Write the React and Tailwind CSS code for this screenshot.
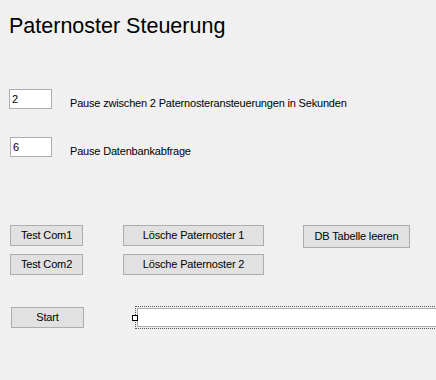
export default function App() {
  const font = { fontFamily: '"Liberation Sans", Arial, sans-serif' };
  const btn =
    "shrink-0 flex items-center justify-center bg-[#e1e1e1] border border-[#adadad] text-[11px] leading-[13px] tracking-[-0.15px] text-black whitespace-nowrap";
  return (
    <div
      className="w-[436px] h-[380px] bg-[#f0f0f0] overflow-hidden flex flex-col"
      style={font}
    >
      <div className="mt-[14px] pl-[9px] text-[21.5px] leading-[24px] text-black whitespace-nowrap">
        Paternoster Steuerung
      </div>

      <div className="mt-[51px] flex items-start">
        <input
          defaultValue="2"
          className="shrink-0 ml-[9px] w-[43px] h-[20px] bg-white border border-[#abadb3] px-[2px] text-[11px] text-black outline-none"
          style={font}
        />
        <div className="ml-[18px] mt-[8px] text-[11px] leading-[13px] tracking-[-0.18px] text-black whitespace-nowrap">
          Pause zwischen 2 Paternosteransteuerungen in Sekunden
        </div>
      </div>

      <div className="mt-[27px] flex items-start">
        <input
          defaultValue="6"
          className="shrink-0 ml-[10px] w-[42px] h-[20px] bg-white border border-[#abadb3] px-[2px] text-[11px] text-black outline-none"
          style={font}
        />
        <div className="ml-[18px] mt-[8px] text-[11px] leading-[13px] tracking-[-0.18px] text-black whitespace-nowrap">
          Pause Datenbankabfrage
        </div>
      </div>

      <div className="mt-[67px] flex items-start">
        <div className="shrink-0 ml-[10px] flex flex-col gap-[8px]">
          <div className={`${btn} w-[73px] h-[21px]`}>Test Com1</div>
          <div className={`${btn} w-[73px] h-[21px]`}>Test Com2</div>
        </div>
        <div className="shrink-0 ml-[40px] flex flex-col gap-[8px]">
          <div className={`${btn} w-[141px] h-[21px]`}>Lösche Paternoster 1</div>
          <div className={`${btn} w-[141px] h-[21px]`}>Lösche Paternoster 2</div>
        </div>
        <div className="shrink-0 ml-[39px]">
          <div className={`${btn} w-[107px] h-[23px]`}>DB Tabelle leeren</div>
        </div>
      </div>

      <div className="mt-[31px] flex items-start">
        <div className={`${btn} ml-[11px] mt-[1px] w-[73px] h-[21px]`}>Start</div>
        <div className="relative ml-[51px] w-[360px] h-[23px] border border-dotted border-[#555] p-[1px] shrink-0">
          <div className="w-full h-full bg-white border border-[#adadad]" />
          <div className="absolute left-[-4px] top-[8px] w-[6px] h-[6px] bg-white border border-black" />
        </div>
      </div>
    </div>
  );
}
